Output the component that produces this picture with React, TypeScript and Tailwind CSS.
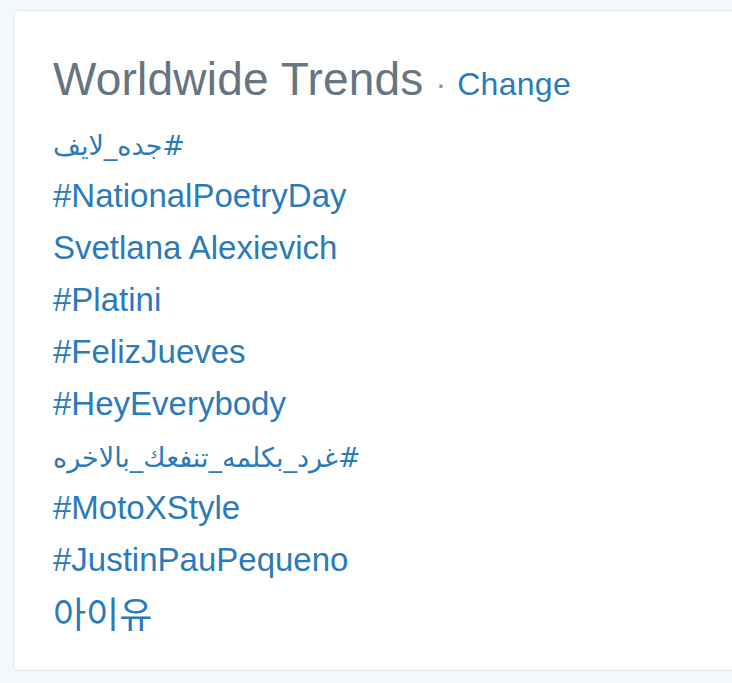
import React from "react";

const trends: { text: string; rtl?: boolean; ko?: boolean }[] = [
  { text: "#جده_لايف", rtl: true },
  { text: "#NationalPoetryDay" },
  { text: "Svetlana Alexievich" },
  { text: "#Platini" },
  { text: "#FelizJueves" },
  { text: "#HeyEverybody" },
  { text: "#غرد_بكلمه_تنفعك_بالاخره", rtl: true },
  { text: "#MotoXStyle" },
  { text: "#JustinPauPequeno" },
  { text: "아이유", ko: true },
];

export default function App() {
  return (
    <div className="w-[732px] h-[683px] overflow-hidden bg-[#f5f8fa] pt-[10px] pl-[13px]">
      <div
        className="w-[760px] bg-white border border-[#e1e8ed] rounded-[6px] pl-[39px] pt-[45px] pb-[32px]"
        style={{ fontFamily: '"Liberation Sans", Arial, sans-serif' }}
      >
        <div className="flex items-baseline whitespace-nowrap">
          <span className="text-[46px] leading-[46px] text-[#66757f] tracking-[0.2px]">Worldwide Trends</span>
          <span className="text-[32px] text-[#8899a6] ml-[12px] mr-[11px]">·</span>
          <span className="text-[32px] text-[#2b7bb9] tracking-[0.3px]">Change</span>
        </div>
        <ul className="mt-[10px]">
          {trends.map((t, i) => (
            <li key={i} className="h-[52px] leading-[52px] text-[33px] text-[#2b7bb9] whitespace-nowrap">
              {t.rtl ? (
                <span
                  dir="rtl"
                  className="text-[27px]"
                  style={{ fontFamily: '"DejaVu Sans", sans-serif' }}
                >
                  {t.text}
                </span>
              ) : t.ko ? (
                <span className="text-[36px]" style={{ fontFamily: '"Noto Sans CJK KR", sans-serif' }}>
                  {t.text}
                </span>
              ) : (
                <span>{t.text}</span>
              )}
            </li>
          ))}
        </ul>
      </div>
    </div>
  );
}
